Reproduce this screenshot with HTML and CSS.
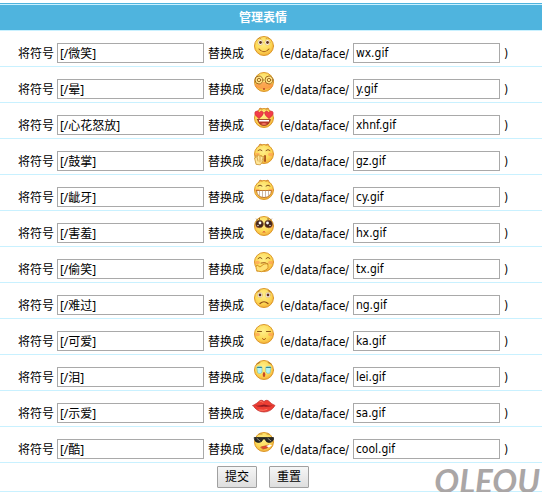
FILE: index.html
```
<!DOCTYPE html>
<html lang="zh-CN">
<head>
<meta charset="utf-8">
<title>管理表情</title>
<link rel="stylesheet" href="styles.css">
</head>
<body>
<svg class="defs" aria-hidden="true">
  <defs>
    <radialGradient id="skin" cx="45%" cy="35%" r="65%">
      <stop offset="0" stop-color="#fff08c"/>
      <stop offset=".65" stop-color="#fdd956"/>
      <stop offset="1" stop-color="#f5b23c"/>
    </radialGradient>
    <symbol id="head" viewBox="0 0 24 24">
      <circle cx="12" cy="12" r="9.5" fill="url(#skin)" stroke="#dc972a"/>
    </symbol>
  </defs>
</svg>
<form class="panel">
  <h1 class="title">管理表情</h1>
  <ul class="list" id="faces"></ul>
  <div class="actions">
    <button class="button" type="submit">提交</button>
    <button class="button" type="reset">重置</button>
    <span class="mark">OLEOU</span>
  </div>
</form>
<script src="faces.js"></script>
</body>
</html>
```
FILE: styles.css
```
* {
  box-sizing: border-box;
}

body {
  margin: 0;
  background: #fff;
  color: #000;
  font: 12px/18px "DejaVu Sans Condensed", "Noto Sans CJK SC", sans-serif;
}

.defs {
  position: absolute;
  width: 0;
  height: 0;
}

.panel {
  margin: 0;
  padding-top: 4px;
}

.title {
  margin: 0;
  padding: 4px 16px 3px 0;
  border-top: 1px solid #c9f1ff;
  border-bottom: 1px solid #c9f1ff;
  background: #4fb4de;
  box-shadow: 0 -1px #4fb4de;
  color: #fff;
  font-size: 12px;
  font-weight: 700;
  line-height: 18px;
  text-align: center;
}

.list {
  margin: 0;
  padding: 0;
  list-style: none;
}

.row {
  display: flex;
  justify-content: center;
  align-items: flex-end;
  gap: 4px;
  height: 36px;
  padding: 0 16px 3px 0;
  border-bottom: 1px solid #c9f1ff;
  white-space: nowrap;
}

.symbol,
.file {
  display: flex;
  align-items: flex-end;
  gap: 3px;
}

.path {
  width: 70px;
}

.field {
  width: 147px;
  height: 20px;
  padding: 0 2px;
  border: 1px solid #a9a9a9;
  border-radius: 0;
  background: #fff;
  color: #000;
  font: inherit;
}

.symbol .field {
  font-family: "Noto Sans", "Noto Sans CJK SC", sans-serif;
}

.face {
  width: 24px;
  height: 24px;
  margin: 0 0 5px 4px;
  fill: none;
  stroke-linecap: round;
  stroke-linejoin: round;
}

.actions {
  position: relative;
  display: flex;
  justify-content: center;
  gap: 12px;
  padding: 3px 16px 3px 0;
  border-bottom: 1px solid #c9f1ff;
}

.button {
  width: 40px;
  height: 22px;
  padding: 0;
  border: 1px solid #a0a0a0;
  border-radius: 1px;
  background: linear-gradient(#f6f6f6, #dedede);
  color: #000;
  font: inherit;
}

.mark {
  position: absolute;
  right: 2px;
  bottom: -3px;
  color: #aaa6a6;
  font: italic 700 33px/28px Lato, sans-serif;
  pointer-events: none;
}
```
FILE: faces.js
```
const eye = (x, y) =>
  `<ellipse cx="${x}" cy="${y}" rx="2.5" ry="2.7" fill="#fff" stroke="#d4a44c" stroke-width=".5"/>
   <circle cx="${x}" cy="${y}" r="1.4" fill="#613018"/>`;
const blush = '<ellipse cx="5.5" cy="12.5" rx="2.5" ry="1.7" fill="#ff9557" opacity=".6"/><ellipse cx="18.5" cy="12.5" rx="2.5" ry="1.7" fill="#ff9557" opacity=".6"/>';
const horns = '<path d="M7 3.500 8 2l2 1M14 3l2-1 1 1.500" fill="#f6b843" stroke="#c97a25" stroke-width=".8"/>';

const faces = [
  ['微笑', 'wx', eye(8.5, 8.5) + eye(15.5, 8.5) +
    '<path d="M7 15q5 5.500 10 0" stroke="#a65b19" stroke-width="1.1"/><path d="M6 4.5q2-1.5 3 0M14 4.5q2-1.5 3 0" stroke="#c78424" stroke-width=".7"/>'],
  ['晕', 'y',
    '<ellipse cx="12" cy="15.5" rx="9" ry="3.5" fill="#fb8747" opacity=".65"/><g stroke="#986218" stroke-width=".9"><circle cx="7" cy="10" r="4" fill="#ffe48a"/><circle cx="17" cy="10" r="4" fill="#ffe48a"/><circle cx="7" cy="10" r="1.700"/><circle cx="17" cy="10" r="1.700"/></g><circle cx="12" cy="19" r="1" fill="#ba442a"/>'],
  ['心花怒放', 'xhnf', horns +
    '<g fill="#f33c49" stroke="#c72b38" stroke-width=".6"><path d="M7 12.500Q1 8 3.500 5.500 6 4 7.300 6.500 9.500 3.500 11.500 6.500 11.500 9.500 7 12.500Z"/><path d="M17 12.500q-4.500-3-4.500-6 2-3 4.200 0 1.300-2.500 3.800-1Q23 8 17 12.500Z"/></g><path d="M5.500 13.500h13q-1.500 6-6.500 6t-6.500-6Z" fill="#b9382a" stroke="#8f331c" stroke-width=".7"/><path d="M7 14h10v1.500H7Z" fill="#fff"/><path d="M9 18q3-2 6 0-3 2-6 0Z" fill="#f57461"/>'],
  ['鼓掌', 'gz', blush + horns +
    '<path d="M6 8.500q2-2 4 0M14 8.500q2-2 4 0" stroke="#905520"/><path d="M13 14v5" stroke="#a84a18" stroke-width="1.800"/><path d="M4 22 2.500 16l1.500-.500-.500-2 2 1 .500-2 2 2 1-1.500 1 2 2-.500-.500 4-3 4Z" fill="#ffe79a" stroke="#d09a38" stroke-width=".9"/><path d="m5 15 1 4m2-4v5m3-4-1 3" stroke="#c78d31" stroke-width=".7"/>'],
  ['龇牙', 'cy', blush + horns +
    '<path d="M6 8q2-2 4 0M14 8q2-2 4 0" stroke="#80501e"/><path d="M4.500 12.500h15q-.500 7-7.500 7t-7.500-7Z" fill="#fff" stroke="#b86b20" stroke-width=".9"/><path d="M7.500 13v4.500m3-4.500v6m3-6v6m3-6v4.500" stroke="#b99b82" stroke-width=".7"/>'],
  ['害羞', 'hx', blush +
    '<g fill="#44241a" stroke="#84502b" stroke-width=".6"><circle cx="7.500" cy="10" r="3.800"/><circle cx="16.500" cy="10" r="3.800"/></g><g fill="#fff"><circle cx="8" cy="9" r="1.400"/><circle cx="15.500" cy="9" r="1.400"/><circle cx="6" cy="11.500" r=".7"/><circle cx="18" cy="11.500" r=".7"/></g><path d="M5 5.500 4.500 5m3 .500V4.500M16 5.500v-1M19 5.500l.500-.500" stroke="#613719" stroke-width=".7"/><path d="M11 18q1-1 2 0" stroke="#d5442c"/>'],
  ['偷笑', 'tx', blush +
    '<path d="M6 8.500q2-2.500 4 0M14 8.500q2-2.500 4 0" stroke="#8b571b"/><path d="M9 13q4-1.500 7 1" stroke="#a65e18" stroke-width="1"/><path d="M5 21q-2-4 0-6l3 2 4-3q4-1 4 1 1 3-2 5-4 3-9 1Z" fill="#ffe073" stroke="#d69426"/>'],
  ['难过', 'ng', eye(8, 9) + eye(16, 9) +
    '<path d="m5.500 6 2.500-1.500m8 0L18.500 6" stroke="#ac6c20" stroke-width=".8"/><path d="M8 17.500q4-3.500 8 0" stroke="#8d4b18" stroke-width="1.200"/>'],
  ['可爱', 'ka', blush +
    '<path d="M5.500 9.500h4m5 0h4" stroke="#8d591b" stroke-width="1"/><path d="M10.500 16.500q.500 1.500 1.500 1 1 .500 1.500-1" stroke="#af5d1c"/>'],
  ['泪', 'lei',
    '<path d="m5 6 3-1.500m8 0L19 6" stroke="#a96b23" stroke-width=".9"/><path d="M5 9q2-1.500 5 0v5q-1 2.500-4 1Zm9 0q3-1.500 5 0l-1 6q-3 1.500-4-1Z" fill="#b5f3f5" stroke="#69bfc4" stroke-width=".6"/><path d="M5.500 9.500h4m5 0h4" stroke="#358493"/><ellipse cx="12" cy="16.500" rx="1.300" ry="2.500" fill="#c64924"/>'],
  ['示爱', 'sa', ''],
  ['酷', 'cool',
    '<path d="M7 4h3m5 0h2" stroke="#c68b28"/><path d="M2.500 7.500h19v2q-1 3-4.500 3-3 0-4-3.500h-2q-1 3.500-4.500 3.500T2.500 9.500Z" fill="#292927" stroke="#151515" stroke-width=".7"/><path d="m5 8.500 3 2.500m8-2.500 3 2.500" stroke="#92958d"/><path d="m9 17 4-1 4-1-2 3-4 1Z" fill="#e84731" stroke="#a83a22" stroke-width=".6"/><path d="m14 16 4-1.500 2 1-3 2Z" fill="#fff"/>'],
];

const lips = '<path d="M1 11.500q4-2 7-5 2-1 4 1 2-2 4-1 4 4 7 5-4 6.500-11 6.500T1 11.500Z" fill="#ed3e33" stroke="#bd2e2b" stroke-width=".7"/><path d="M3 11.500q5 .500 9-1 4 1.500 9 1-5 2-9 1-5 1-9-1Z" fill="#8f1920"/><path d="M8 7.500q2-1 3 1m-4 7.500q5 1 8-.500" stroke="#ff8870" stroke-width=".8"/>';

document.getElementById('faces').innerHTML = faces.map(([name, file, art]) => {
  const drawing = file === 'sa' ? lips : `<use href="#head" width="24" height="24"/>${art}`;
  return `<li class="row">
    <label class="symbol">将符号 <input class="field" type="text" value="[/${name}]"></label>
    <span>替换成</span>
    <svg class="face" viewBox="0 0 24 24" role="img" aria-label="${name}">${drawing}</svg>
    <label class="file"><span class="path">(e/data/face/</span> <input class="field" type="text" value="${file}.gif"></label>
    <span>)</span>
  </li>`;
}).join('');
```
